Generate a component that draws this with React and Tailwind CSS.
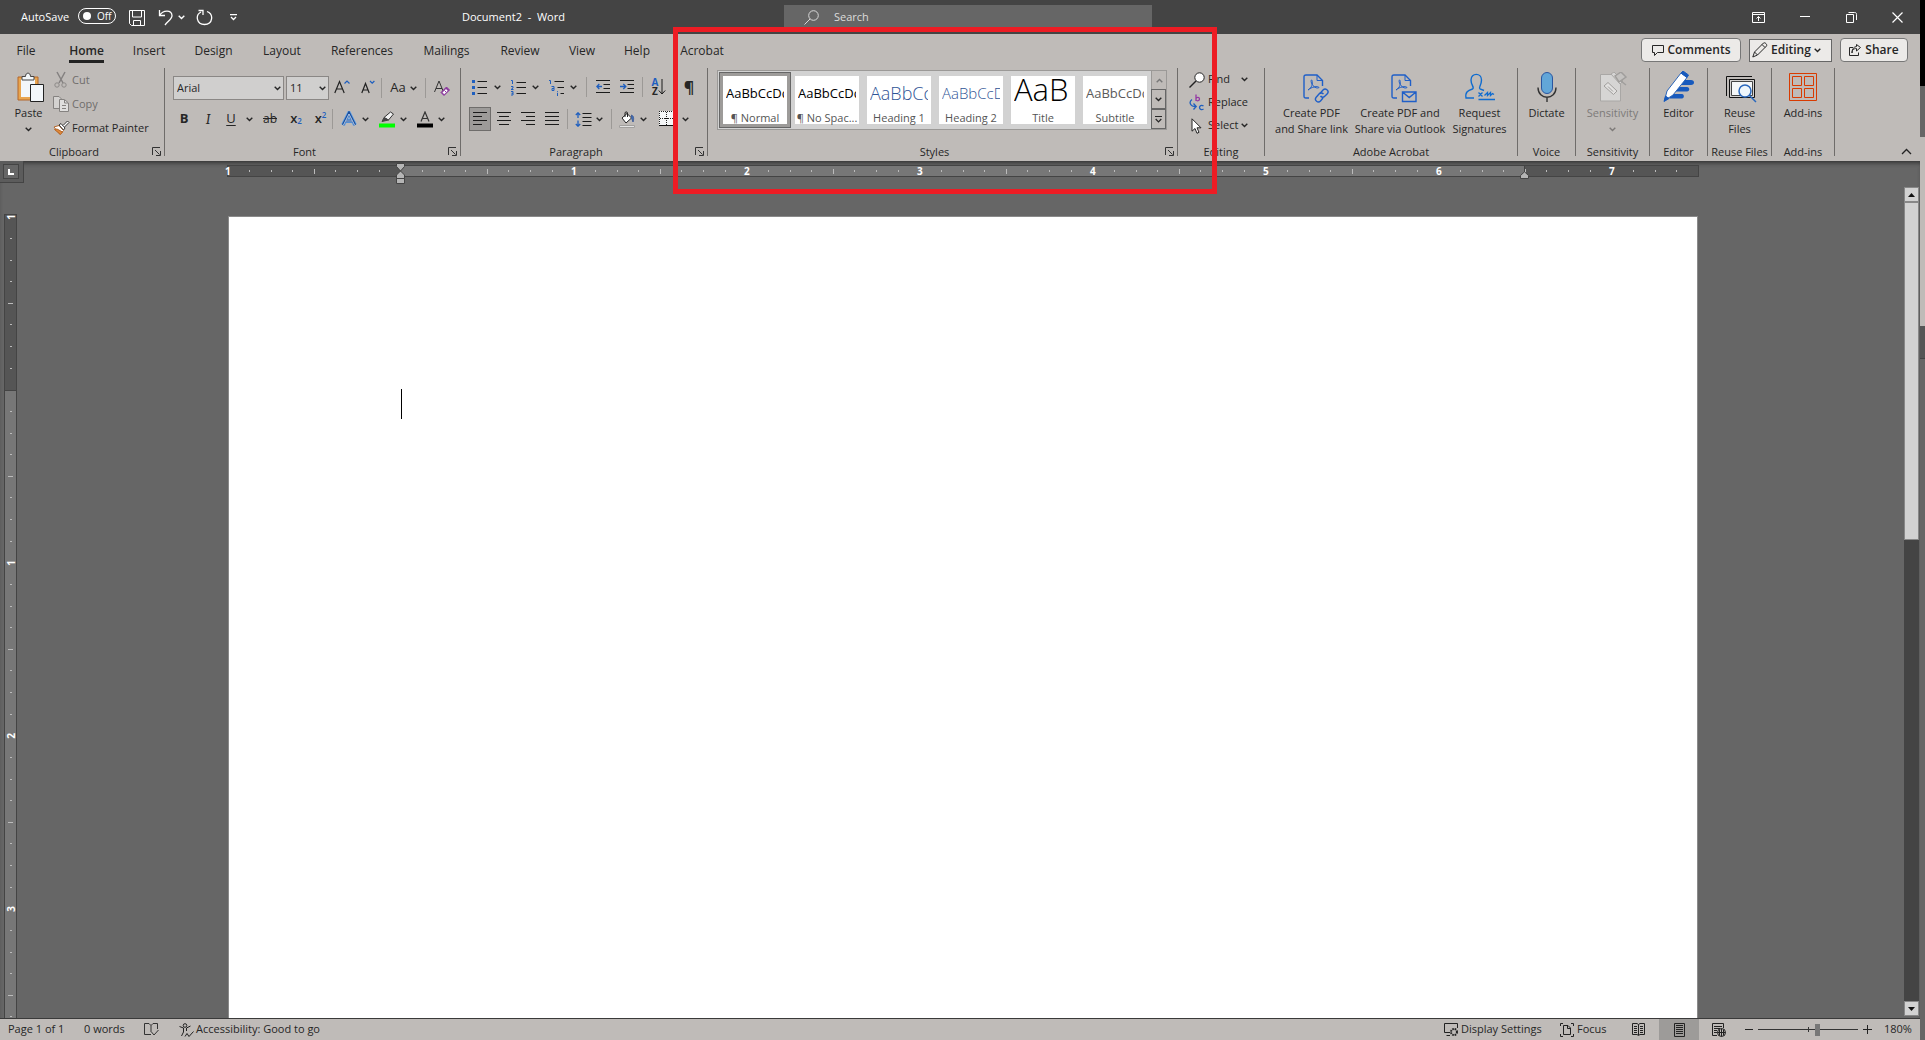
import React, { useState } from 'react';

const tabs = [
    { name: 'File', width: 'w-[52px]' },
    { name: 'Home', width: 'w-[69px]' },
    { name: 'Insert', width: 'w-[56px]' },
    { name: 'Design', width: 'w-[73px]' },
    { name: 'Layout', width: 'w-[64px]' },
    { name: 'References', width: 'w-[96px]' },
    { name: 'Mailings', width: 'w-[73px]' },
    { name: 'Review', width: 'w-[74px]' },
    { name: 'View', width: 'w-[50px]' },
    { name: 'Help', width: 'w-[60px]' },
    { name: 'Acrobat', width: 'w-[70px]' },
];

const styles = [
    { name: '¶ Normal', preview: 'AaBbCcDd', look: 'text-[13px] text-black' },
    { name: '¶ No Spac...', preview: 'AaBbCcDd', look: 'text-[13px] text-black' },
    { name: 'Heading 1', preview: 'AaBbCc', look: 'text-[18px] font-light text-[#2f5496]' },
    { name: 'Heading 2', preview: 'AaBbCcD', look: 'text-[15px] font-light text-[#2f5496]' },
    { name: 'Title', preview: 'AaB', look: 'pb-2 text-[31px] font-light text-black' },
    { name: 'Subtitle', preview: 'AaBbCcDd', look: 'text-[13px] text-[#5a5a5a]' },
];

const Svg = ({ w, h, children, className }) => (
    <svg width={w} height={h} viewBox={`0 0 ${w} ${h}`} fill="none" stroke="currentColor" className={`shrink-0 ${className || ''}`} aria-hidden="true">
        {children}
    </svg>
);

const Chevron = ({ className }) => (
    <Svg w={7} h={5} className={className}>
        <path d="M.7 .8 3.5 3.6 6.3 .8" strokeWidth="1.4" />
    </Svg>
);

const Lines = ({ rows }) => (
    <Svg w={15} h={14}>
        {rows.map(([x1, x2], i) => (
            <path key={i} d={`M${x1} ${i * 4 + 0.5}H${x2}`} stroke="#1b1b1b" />
        ))}
    </Svg>
);

const Tool = ({ label, className, children }) => (
    <button type="button" aria-label={label} className={`flex h-6 shrink-0 items-center justify-center ${className}`}>
        {children}
    </button>
);

const More = ({ label, className = 'w-2' }) => (
    <Tool label={label} className={className}>
        <Chevron />
    </Tool>
);

const Sep = ({ className }) => <div className={`h-5 w-px shrink-0 bg-[#9c9996] ${className || ''}`} />;

const Launcher = ({ label }) => (
    <button type="button" aria-label={label} className="absolute right-[3px] bottom-0">
        <Svg w={9} h={9}>
            <path d="M.5 8V.5H8M3 3l4.500 4.500M8.500 4v4.500H4" stroke="#333" />
        </Svg>
    </button>
);

const Group = ({ label, className, launcher, children }) => (
    <section aria-label={label} className={`relative flex h-[88px] shrink-0 flex-col border-r border-[#6f6c6a] ${className}`}>
        <div className="min-h-0 flex-1">{children}</div>
        <div className={`h-2 text-center text-[11px] leading-[8px] whitespace-nowrap ${launcher ? 'pr-4' : ''}`}>{label}</div>
        {launcher && <Launcher label={`${label} settings`} />}
    </section>
);

const BigButton = ({ icon, lines, className, children }) => (
    <button type="button" className={`flex shrink-0 flex-col items-center text-[11px] leading-4 whitespace-nowrap ${className}`}>
        <span className="flex h-[37px] items-center">{icon}</span>
        {lines.map((line) => (
            <span key={line}>{line}</span>
        ))}
        {children}
    </button>
);

/* ---------- icons ---------- */

const PasteIcon = () => (
    <Svg w={28} h={30} className="ml-1">
        <path d="M1 5H21V28H1Z" fill="#e8a54f" stroke="#b4662a" />
        <path d="M4 7H18V25H4Z" fill="#f3f7fa" stroke="none" />
        <path d="M5 8V4.500H8.500C8.500 0 13.500 0 13.500 4.500H17V8Z" fill="#f3f7fa" stroke="#444" />
        <path d="M13.500 12.500H26.500V29.500H13.500Z" fill="#f3f7fa" stroke="#222" />
    </Svg>
);

const CutIcon = () => (
    <Svg w={16} h={18}>
        <path d="M4 1 10 12M12 1 6 12" stroke="#848180" strokeWidth="1.500" />
        <circle cx="4" cy="14" r="2.200" stroke="#8d8a88" />
        <circle cx="11" cy="14" r="2.200" stroke="#8d8a88" />
    </Svg>
);

const CopyIcon = () => (
    <Svg w={16} h={16}>
        <path d="M.5 .5H6L8.500 3V12.500H.5Z" fill="#d4d2d0" stroke="#858280" />
        <path d="M6.500 3.500H11.500L15.500 7V15.500H6.500Z" fill="#e0dfde" stroke="#858280" />
        <path d="M9 9.500H13M9 12.500H13M11.500 4V7H15" stroke="#858280" />
    </Svg>
);

const BrushIcon = () => (
    <Svg w={17} h={16}>
        <path d="M1 7 6 5.500 10.500 10.500 7 14.500Z" fill="#fff" stroke="#b4662a" />
        <path d="M1.500 9.500 7.500 14.500 9.500 12 4 9Z" fill="#e08a3a" stroke="#b4662a" />
        <path d="M6 5 8 3.500 12 8 10.500 10Z" fill="#fff" stroke="#333" />
        <path d="M10 5.500 14.500 1 16 2.500 11.500 7" fill="#fff" stroke="#333" />
    </Svg>
);

const NumberedIcon = () => (
    <Svg w={17} h={17}>
        <path d="M6.500 3.500H16M6.500 8.500H16M6.500 14.500H16" stroke="#1b1b1b" />
        <path d="M1 1.500H2.500V5M1 7.500H3V9L1 10.500H3.500M1 12.500H3V16H1M1.500 14.300H3" stroke="#1f5fbf" />
    </Svg>
);

const BulletIcon = () => (
    <Svg w={16} h={16}>
        <path d="M5.500 2.500H15M5.500 8.500H15M5.500 14.500H15" stroke="#1b1b1b" />
        <path d="M0 1h3v3H0zM0 7h3v3H0zM0 13h3v3H0z" fill="#1f5fbf" stroke="none" />
    </Svg>
);

const MultiIcon = () => (
    <Svg w={16} h={17}>
        <path d="M5.500 2.500H15M8.500 8.500H15M11.500 14.500H15" stroke="#1b1b1b" />
        <path d="M0 1.500H1.500V5M2.500 7.500H5V11.500H3V9.500H5M8.500 12V12.800M8.500 13.800V17" stroke="#1f5fbf" />
    </Svg>
);

const IndentIcon = ({ right }) => (
    <Svg w={15} h={14}>
        <path d="M0 .5H14M7.500 4.500H14M7.500 8.500H14M0 12.500H14" stroke="#1b1b1b" />
        {right ? (
            <path d="M0 6.500H5.500M3.300 4 5.800 6.500 3.300 9" stroke="#1f5fbf" strokeWidth="1.300" />
        ) : (
            <path d="M6 6.500H.8M3.300 4 .8 6.500 3.300 9" stroke="#1f5fbf" strokeWidth="1.300" />
        )}
    </Svg>
);

const SortIcon = () => (
    <span className="flex items-center">
        <span className="flex flex-col text-[10px] leading-[9px] font-bold">
            <span className="text-[#1f5fbf]">A</span>
            <span>Z</span>
        </span>
        <Svg w={8} h={16}>
            <path d="M4 0V15M.8 11.500 4 15 7.200 11.500" stroke="#1b1b1b" />
        </Svg>
    </span>
);

const SpacingIcon = () => (
    <Svg w={17} h={15}>
        <path d="M7.500 1.500H16.500M7.500 5.500H16.500M7.500 9.500H16.500M7.500 13.500H16.500" stroke="#1b1b1b" />
        <path d="M3 1V6M.8 3 3 .8 5.200 3M3 8.500V14M.8 12 3 14.200 5.200 12" stroke="#1f5fbf" strokeWidth="1.300" />
    </Svg>
);

const BucketIcon = () => (
    <Svg w={17} h={17}>
        <path d="M3 7 8 2.500 12.500 7 7 12Z" fill="#fff" stroke="#222" />
        <path d="M6 6V2C6 .5 8.500 .5 8.500 2V6" stroke="#222" />
        <path d="M12.500 4C15 5 15 8 14 11L12.500 7Z" fill="#3f6fb5" stroke="#44609a" />
        <path d="M.5 14.500H15.500V16.500H.5Z" fill="#e3e3e3" stroke="#a2a09e" />
    </Svg>
);

const BordersIcon = () => (
    <Svg w={16} h={16}>
        <path d="M0 0H16V15H0Z" fill="#f5f7f8" stroke="none" />
        <path d="M0 .5H16M.5 0V15M15.500 0V15M7.500 1V15M1 7.500H15" stroke="#222" strokeDasharray="1 1" />
        <path d="M0 14.500H16M6 7.500H9" stroke="#111" />
    </Svg>
);

const EraserIcon = () => (
    <Svg w={16} h={17}>
        <path d="M.5 12 5 1 9.500 12M2 8.500H8" stroke="#333" />
        <path d="M7 12.500 12.500 7 15.500 10 10 15.500Z" fill="#8d3a9e" stroke="#8d3a9e" />
        <path d="M8.500 12.500 12 9 13.700 10.700 10.200 14.200Z" fill="#fff" stroke="none" />
        <path d="M10.500 10.500 12.200 12.200" stroke="#8d3a9e" />
    </Svg>
);

const HighlightIcon = () => (
    <Svg w={17} h={17}>
        <path d="M5 6.500 11.500 1 14.500 3 9.500 9Z" fill="#f3f3f3" stroke="#333" />
        <path d="M5 6.500 3 10.500 9.500 9Z" fill="#444" stroke="#444" />
        <path d="M0 12.500H16V16.500H0Z" fill="#00ff00" stroke="none" />
    </Svg>
);

const FindIcon = () => (
    <Svg w={16} h={16}>
        <circle cx="10.500" cy="5.500" r="4.700" fill="#fff" stroke="#222" />
        <path d="M7 9 .5 15.500" stroke="#222" strokeWidth="1.400" />
    </Svg>
);

const ReplaceIcon = () => (
    <Svg w={16} h={17}>
        <path d="M7 .5V7M7 4.500C8 2.500 10.500 3.200 10.500 5S8 7.500 7 6" stroke="#9438a4" strokeWidth="1.300" />
        <path d="M14.500 12C12.500 10.500 10.500 12 10.500 13.500S12.500 16.500 14.500 15" stroke="#1f5fbf" strokeWidth="1.300" />
        <path d="M3 5.500C-.5 8 1 12.500 7 12.500M4.500 9.500 7.200 12.500 4.500 15.500" stroke="#1f5fbf" strokeWidth="1.300" />
    </Svg>
);

const SelectIcon = () => (
    <Svg w={16} h={16}>
        <path d="M3 .8V13.200L6 10.500 8 15.300 10 14.300 8 9.800H12Z" fill="#fff" stroke="#222" />
    </Svg>
);

const PdfIcon = ({ mail }) => (
    <Svg w={26} h={29} className="mt-1 ml-2">
        <path d="M6 24H3C1.500 24 1 23.500 1 22V3C1 1.500 1.500 1 3 1H14L19.500 6.500V12" stroke="#1f5fc8" strokeWidth="1.400" />
        <path d="M14 1V6.500H19.500" stroke="#1f5fc8" />
        <path d="M5 16C9 14 10 9 9 6.500C8.500 5 7.500 6.500 8.500 9C10 13 14 15 16 13.500C15.500 11.500 8 13 5 16Z" stroke="#1f5fc8" />
        {mail ? (
            <path d="M11.500 18H25V27.500H11.500ZM11.500 18 18.200 23.500 25 18" stroke="#1f5fc8" strokeWidth="1.400" />
        ) : (
            <g stroke="#1f5fc8" strokeWidth="1.400">
                <path d="M17 19.500 20 16C22.500 13.500 26.500 16.500 24.500 19.500L21.500 22.500C20.500 23.500 18.500 23.500 17.500 22" />
                <path d="M20.500 20C19 18.500 17 18.800 16 20L13 23.500C11 26.500 15 29.500 17.500 27L20 24" />
            </g>
        )}
    </Svg>
);

const SignIcon = () => (
    <Svg w={32} h={28}>
        <path d="M10 25H2C1 19 4 17.500 8.500 16C11 14.500 7 12.500 7 7C7 -.5 17.500 -.5 17.500 7C17.500 12.500 14 14.500 16 16L20 17.500" stroke="#0f6cd0" strokeWidth="1.400" />
        <path d="M14.500 19.500 18.500 23.500M18.500 19.500 14.500 23.500M20.500 22.500 23.500 19.500V22.500L26.500 19.500V22.500L28.500 20.500 30 21.500M14.500 26.500H31" stroke="#0f6cd0" strokeWidth="1.300" />
    </Svg>
);

const MicIcon = () => (
    <Svg w={20} h={30}>
        <rect x="4.500" y=".5" width="11" height="21" rx="5.500" fill="#62a6d8" stroke="#2b56a0" />
        <path d="M1 15.500C1 28.500 19 28.500 19 15.500M10 25.500V30" stroke="#333" strokeWidth="1.400" />
    </Svg>
);

const SensitivityIcon = () => (
    <Svg w={28} h={30}>
        <path d="M1.500 2.500H21.500V29H1.500Z" fill="#d6d5d4" stroke="#a9a7a5" />
        <path d="M12 2 15 0 24 9 21 12Z" fill="#d6d5d4" stroke="#a9a7a5" />
        <path d="M16 4 22 0 27 5 20 10ZM22 9 27 13" fill="#c4c2c0" stroke="#a09e9c" strokeWidth="1.500" />
        <path d="M5 14 9 10.500 18 19 14.500 22.500ZM9 14.500 14 19.500" fill="#e2e1e0" stroke="#a09e9c" />
    </Svg>
);

const EditorIcon = () => (
    <Svg w={31} h={31}>
        <path d="M18 9H28C32 9 32 14 28 14H14ZM14 16H24C27 16 27 20.500 24 20.500H10ZM9 23H19C21.500 23 21.500 27.500 19 27.500H6Z" fill="#185abd" stroke="none" />
        <path d="M4 20 18 2 24 6.500 10 24 1.500 29.500Z" fill="#fff" stroke="#2a64b8" />
        <path d="M18 2 20 0 25.500 4 24 6.500ZM1 30.500 2.500 25 6 27.500Z" fill="#185abd" stroke="#185abd" />
    </Svg>
);

const ReuseIcon = () => (
    <Svg w={31} h={28} className="mt-1 ml-1">
        <path d="M.5 21V1.500H26" stroke="#111" />
        <path d="M3.500 4.500H28.500V22.500H3.500Z" fill="#d4d2d1" stroke="#111" />
        <path d="M5.500 6.500H26.500V20.500H5.500Z" fill="#f5f7f8" stroke="#444" />
        <circle cx="19" cy="16" r="6" fill="#eef6fc" stroke="#2a68bd" strokeWidth="1.500" />
        <path d="M23.500 20.500 30 27" stroke="#2a68bd" strokeWidth="1.500" />
    </Svg>
);

const AddinsIcon = () => (
    <Svg w={28} h={28}>
        <path d="M.5 .5H27.500V27.500H.5ZM3.500 3.500H12.500V12.500H3.500ZM15.500 3.500H24.500V12.500H15.500ZM3.500 15.500H12.500V24.500H3.500ZM15.500 15.500H24.500V24.500H15.500Z" stroke="#d83b01" />
    </Svg>
);

/* ---------- title bar ---------- */

const TitleBar = () => {
    const [autoSave, setAutoSave] = useState(false);

    return (
        <header className="flex h-[34px] items-center bg-[#444] text-[11px] text-white">
            <div className="flex w-[450px] items-center pl-[21px]">
                <label className="flex w-[108px] items-center" htmlFor="autosave">
                    <span className="w-[57px]">AutoSave</span>
                    <input id="autosave" type="checkbox" className="sr-only" checked={autoSave} onChange={(e) => setAutoSave(e.target.checked)} />
                    <span className="mb-0.5 flex h-4 w-[38px] items-center gap-1.5 rounded-full border border-white pl-1 text-[10px] leading-none">
                        <span className="h-2 w-2 rounded-full bg-white" />
                        {autoSave ? 'On' : 'Off'}
                    </span>
                </label>
                <button type="button" aria-label="Save" className="w-[29px] pt-0.5">
                    <Svg w={16} h={16}>
                        <path d="M.5 .5H15.500V15.500H2.500L.5 13.500ZM3.500 .5V7H12.500V.5M4.500 15.500V10.500H11.500V15.500" />
                    </Svg>
                </button>
                <button type="button" aria-label="Undo" className="w-[20px]">
                    <Svg w={16} h={17}>
                        <path d="M1.500 1V6.500H7M1.500 6.500C5 1 13.500 .5 14 6.500C14.300 10 10 12 7 16" strokeWidth="1.300" />
                    </Svg>
                </button>
                <button type="button" aria-label="Undo list" className="w-[18px]">
                    <Chevron />
                </button>
                <button type="button" aria-label="Redo" className="w-[34px]">
                    <Svg w={17} h={17}>
                        <path d="M2.500 1.500H7V6M5 3C-1 6 .5 15.500 8.500 15.500C17 15.500 18 5 11 2.500" strokeWidth="1.300" />
                    </Svg>
                </button>
                <button type="button" aria-label="Customize toolbar">
                    <Svg w={7} h={7}>
                        <path d="M0 .5H7M1 3 3.500 5.500 6 3" strokeWidth="1.300" />
                    </Svg>
                </button>
            </div>
            <h1 className="w-[334px] pt-px pl-3 whitespace-pre">Document2  -  Word</h1>
            <label className="flex h-6 w-[368px] items-center bg-[#666] pl-5" htmlFor="search">
                <Svg w={15} h={15}>
                    <circle cx="9.500" cy="5.500" r="4.800" stroke="#d8d8d8" />
                    <path d="M6 9 .5 14.500" stroke="#d8d8d8" />
                </Svg>
                <input id="search" type="text" placeholder="Search" className="ml-[15px] w-60 bg-transparent text-[11px] outline-none placeholder:text-[#dcdcdc]" />
            </label>
            <div className="ml-auto flex items-center">
                <button type="button" aria-label="Ribbon display options" className="flex w-[47px] justify-center">
                    <Svg w={13} h={11}>
                        <path d="M.5 .5H12.500V10.500H.5ZM.5 2.500H12.500M6.500 9V4.500M4.500 6.500 6.500 4.500 8.500 6.500" />
                    </Svg>
                </button>
                <button type="button" aria-label="Minimize" className="flex w-[46px] justify-center">
                    <Svg w={10} h={2}>
                        <path d="M0 .5H10" />
                    </Svg>
                </button>
                <button type="button" aria-label="Restore" className="flex w-[46px] justify-center">
                    <Svg w={11} h={11}>
                        <path d="M.5 2.500H7.500V10.500H.5ZM2.500 .5H8.500C10 .5 10.500 1 10.500 2.500V8" />
                    </Svg>
                </button>
                <button type="button" aria-label="Close" className="flex w-[46px] justify-center">
                    <Svg w={11} h={11}>
                        <path d="M.5 .5 10.500 10.500M10.500 .5 .5 10.500" strokeWidth="1.200" />
                    </Svg>
                </button>
            </div>
        </header>
    );
};

/* ---------- ribbon ---------- */

const ClipboardGroup = () => (
    <Group label="Clipboard" className="w-[165px]" launcher>
        <div className="flex">
            <BigButton className="w-[53px] pl-1" icon={<PasteIcon />} lines={['Paste']}>
                <Chevron className="mt-1.5" />
            </BigButton>
            <div className="flex flex-col text-[11px] whitespace-nowrap">
                <button type="button" className="flex h-6 items-center gap-[3px] text-[#6f6d6b]">
                    <CutIcon />
                    Cut
                </button>
                <button type="button" className="flex h-6 items-center gap-[3px] text-[#6f6d6b]">
                    <CopyIcon />
                    Copy
                </button>
                <button type="button" className="flex h-6 items-center gap-0.5">
                    <BrushIcon />
                    Format Painter
                </button>
            </div>
        </div>
    </Group>
);

const FontGroup = () => (
    <Group label="Font" className="w-[296px]" launcher>
        <div className="flex items-center pt-2 pl-2">
            <div className="relative">
                <select aria-label="Font" className="block h-6 w-[111px] appearance-none border border-[#8a8785] bg-[#d0cfce] pl-[3px] text-[11px]">
                    <option>Arial</option>
                    <option>Calibri</option>
                </select>
                <Chevron className="pointer-events-none absolute top-2.5 right-[3px]" />
            </div>
            <div className="relative ml-0.5">
                <select aria-label="Font size" defaultValue="11" className="block h-6 w-[43px] appearance-none border border-[#8a8785] bg-[#d0cfce] pl-[3px] text-[11px]">
                    <option>11</option>
                    <option>12</option>
                </select>
                <Chevron className="pointer-events-none absolute top-2.5 right-[3px]" />
            </div>
            <Tool label="Grow font" className="w-[26px]">
                <Svg w={16} h={18}>
                    <path d="M.8 14 5.500 2.500 10.200 14M2.500 10H8.500" stroke="#222" strokeWidth="1.200" />
                    <path d="M10.500 4.500 13 2 15.500 4.500" stroke="#1f5fbf" strokeWidth="1.200" />
                </Svg>
            </Tool>
            <Tool label="Shrink font" className="w-[26px]">
                <Svg w={14} h={18}>
                    <path d="M.8 14 4.500 4.500 8.200 14M2 11H7" stroke="#222" strokeWidth="1.200" />
                    <path d="M9 2 11.200 4.200 13.400 2" stroke="#1f5fbf" strokeWidth="1.200" />
                </Svg>
            </Tool>
            <Sep />
            <Tool label="Change case" className="w-[43px] gap-1 text-[13px]">
                Aa
                <Chevron />
            </Tool>
            <Sep />
            <Tool label="Clear formatting" className="w-8">
                <EraserIcon />
            </Tool>
        </div>
        <div className="flex items-center pt-[7px] pl-[7px] text-[13px]">
            <Tool label="Bold" className="w-6 font-bold">B</Tool>
            <Tool label="Italic" className="w-6 font-serif text-[14px] italic">I</Tool>
            <Tool label="Underline" className="w-[22px] underline underline-offset-2">U</Tool>
            <More label="Underline styles" className="w-[15px]" />
            <Tool label="Strikethrough" className="w-[26px] text-[12px] line-through">ab</Tool>
            <Tool label="Subscript" className="w-[26px] font-semibold">
                x<sub className="text-[8px] text-[#1f5fbf]">2</sub>
            </Tool>
            <Tool label="Superscript" className="w-[23px] font-semibold">
                x<sup className="text-[8px] text-[#1f5fbf]">2</sup>
            </Tool>
            <Sep />
            <div className="ml-1 flex gap-1.5">
                <div className="flex">
                    <Tool label="Text effects" className="w-6">
                        <Svg w={16} h={16}>
                            <path d="M2 14 8 2 14 14M5 10H11" stroke="#6aa5e6" strokeWidth="4" />
                            <path d="M2 14 8 2 14 14M5 10H11" stroke="#1a4f9c" strokeWidth="2.500" />
                            <path d="M2.500 14 8 3 13.500 14M5 10H11" stroke="#dfeaf7" strokeWidth=".8" />
                        </Svg>
                    </Tool>
                    <More label="Text effects list" />
                </div>
                <div className="flex">
                    <Tool label="Highlight" className="w-6">
                        <HighlightIcon />
                    </Tool>
                    <More label="Highlight colours" />
                </div>
                <div className="flex">
                    <Tool label="Font colour" className="w-6">
                        <Svg w={16} h={17}>
                            <path d="M4 10.500 8 1 12 10.500M5.300 7.500H10.700" stroke="#333" strokeWidth="1.200" />
                            <path d="M0 12.500H16V16.500H0Z" fill="#000" stroke="none" />
                        </Svg>
                    </Tool>
                    <More label="Font colours" />
                </div>
            </div>
        </div>
    </Group>
);

const ParagraphGroup = () => (
    <Group label="Paragraph" className="w-[247px]" launcher>
        <div className="flex items-center pt-[7px] pl-2">
            <Tool label="Bullets" className="w-[22px]"><BulletIcon /></Tool>
            <More label="Bullet library" className="w-[13px]" />
            <Tool label="Numbering" className="ml-[3px] w-[22px]"><NumberedIcon /></Tool>
            <More label="Numbering library" className="w-[13px]" />
            <Tool label="Multilevel list" className="ml-1 w-[22px]"><MultiIcon /></Tool>
            <More label="List library" className="w-[11px]" />
            <Sep className="ml-[7px]" />
            <Tool label="Decrease indent" className="ml-1 w-6"><IndentIcon /></Tool>
            <Tool label="Increase indent" className="w-6"><IndentIcon right /></Tool>
            <Sep className="ml-[3px]" />
            <Tool label="Sort" className="ml-1 w-6"><SortIcon /></Tool>
            <Tool label="Show marks" className="ml-1.5 w-6 text-[16px] font-bold">¶</Tool>
        </div>
        <div className="flex items-center pt-2 pl-2">
            <div className="flex gap-0.5">
                <Tool label="Align left" className="w-[22px] bg-[#9d9b99] ring-1 ring-[#6f6d6b] ring-inset">
                    <Lines rows={[[0, 14], [0, 9], [0, 14], [0, 9]]} />
                </Tool>
                <Tool label="Center" className="w-[22px]"><Lines rows={[[0, 14], [2, 12], [0, 14], [2, 12]]} /></Tool>
                <Tool label="Align right" className="w-[22px]"><Lines rows={[[0, 14], [5, 14], [0, 14], [5, 14]]} /></Tool>
                <Tool label="Justify" className="w-[22px]"><Lines rows={[[0, 14], [0, 14], [0, 14], [0, 14]]} /></Tool>
            </div>
            <Sep className="ml-1" />
            <Tool label="Line spacing" className="ml-[3px] w-6"><SpacingIcon /></Tool>
            <More label="Line spacing options" />
            <Sep className="ml-2" />
            <Tool label="Shading" className="ml-[3px] w-6"><BucketIcon /></Tool>
            <More label="Shading colours" />
            <Tool label="Borders" className="ml-2 w-6"><BordersIcon /></Tool>
            <More label="Border options" className="w-3" />
        </div>
    </Group>
);

const StylesGroup = () => {
    const [active, setActive] = useState(0);

    return (
        <Group label="Styles" className="w-[470px]" launcher>
            <div className="mt-0.5 ml-[9px] flex h-[60px] w-[450px] border border-[#9b9997] bg-[#d2d2d2]">
                <div className="flex flex-1 items-center pl-px">
                    {styles.map((style, i) => (
                        <button
                            key={style.name}
                            type="button"
                            onClick={() => setActive(i)}
                            className={`flex h-14 w-[72px] flex-col border p-[3px] ${
                                i === active ? 'border-[#666] bg-[#9d9b99]' : 'border-transparent'
                            }`}
                        >
                            <span className="flex h-12 w-full flex-col bg-white px-[3px] pt-[3px]">
                                <span className={`flex h-[29px] items-center overflow-hidden whitespace-nowrap ${style.look}`}>
                                    {style.preview}
                                </span>
                                <span className="flex h-4 items-center justify-center pt-1 text-[11px] leading-4 whitespace-nowrap text-[#555]">{style.name}</span>
                            </span>
                        </button>
                    ))}
                </div>
                <div className="flex w-[15px] flex-col">
                    <button type="button" aria-label="Previous styles" className="flex flex-1 items-center justify-center border-l border-[#9b9997] bg-[#bfbbb8] text-[#777]">
                        <Chevron className="rotate-180" />
                    </button>
                    <button type="button" aria-label="Next styles" className="flex flex-1 items-center justify-center border border-[#666] bg-[#bfbbb8]">
                        <Chevron />
                    </button>
                    <button type="button" aria-label="All styles" className="flex flex-1 items-center justify-center border border-[#666] bg-[#bfbbb8]">
                        <Svg w={7} h={7}>
                            <path d="M0 .5H7M.7 3 3.500 5.800 6.300 3" strokeWidth="1.200" />
                        </Svg>
                    </button>
                </div>
            </div>
        </Group>
    );
};

const EditingGroup = () => (
    <Group label="Editing" className="w-[87px]">
        <div className="flex flex-col pl-[11px] text-[11px]">
            <button type="button" className="flex h-[23px] items-center gap-[3px]">
                <FindIcon />
                Find
                <Chevron className="ml-2" />
            </button>
            <button type="button" className="flex h-[23px] items-center gap-[3px]">
                <ReplaceIcon />
                Replace
            </button>
            <button type="button" className="flex h-[23px] items-center gap-[3px]">
                <SelectIcon />
                Select
                <Chevron />
            </button>
        </div>
    </Group>
);

const Ribbon = () => (
    <div className="flex pt-0.5 pb-[5px]">
        <ClipboardGroup />
        <FontGroup />
        <ParagraphGroup />
        <StylesGroup />
        <EditingGroup />
        <Group label="Adobe Acrobat" className="w-[253px]">
            <div className="flex justify-center">
                <BigButton className="w-[80px]" icon={<PdfIcon />} lines={['Create PDF', 'and Share link']} />
                <BigButton className="w-[97px]" icon={<PdfIcon mail />} lines={['Create PDF and', 'Share via Outlook']} />
                <BigButton className="w-[62px]" icon={<SignIcon />} lines={['Request', 'Signatures']} />
            </div>
        </Group>
        <Group label="Voice" className="w-[58px]">
            <BigButton className="w-full" icon={<MicIcon />} lines={['Dictate']} />
        </Group>
        <Group label="Sensitivity" className="w-[74px]">
            <BigButton className="w-full text-[#7d7a78]" icon={<SensitivityIcon />} lines={['Sensitivity']}>
                <Chevron className="mt-1.5" />
            </BigButton>
        </Group>
        <Group label="Editor" className="w-[58px]">
            <BigButton className="w-full" icon={<EditorIcon />} lines={['Editor']} />
        </Group>
        <Group label="Reuse Files" className="w-[64px]">
            <BigButton className="w-full" icon={<ReuseIcon />} lines={['Reuse', 'Files']} />
        </Group>
        <Group label="Add-ins" className="w-[63px]">
            <BigButton className="w-full" icon={<AddinsIcon />} lines={['Add-ins']} />
        </Group>
        <button type="button" aria-label="Collapse ribbon" className="mr-2 ml-auto self-end pb-px">
            <Svg w={11} h={7}>
                <path d="M1 6 5.500 1.500 10 6" stroke="#222" strokeWidth="1.300" />
            </Svg>
        </button>
    </div>
);

const TabBar = () => {
    const [tab, setTab] = useState('Home');

    return (
        <nav className="flex h-8 items-center">
            {tabs.map(({ name, width }) => (
                <button key={name} type="button" onClick={() => setTab(name)} className={`flex h-full shrink-0 items-center justify-center text-[12px] ${width}`}>
                    <span className={`border-b-[3px] pt-[5px] ${tab === name ? 'border-b-[#222] font-semibold' : 'border-b-transparent'}`}>{name}</span>
                </button>
            ))}
            <div className="mr-3 ml-auto flex items-center gap-2 text-[12px]">
                <button type="button" className="flex h-6 w-[100px] items-center justify-center gap-1 rounded border border-[#777] bg-[#eceae8] font-semibold">
                    <Svg w={12} h={11}>
                        <path d="M.5 .5H11.500V7.500H5.500L2.500 10.500V7.500H.5Z" />
                    </Svg>
                    Comments
                </button>
                <button type="button" className="flex h-[23px] w-[83px] items-center gap-[3px] border border-[#666] bg-[#eceae8] pl-0.5 font-semibold">
                    <Svg w={16} h={16}>
                        <path d="M.8 15 2.500 10 11.500 1C13 0 15.500 2.500 14.500 4L5.500 13ZM10 2.500 13 5.500M2.500 10 5.500 13" />
                    </Svg>
                    Editing
                    <Chevron />
                </button>
                <button type="button" className="flex h-6 w-[68px] items-center justify-center gap-1 rounded border border-[#777] bg-[#eceae8] font-semibold">
                    <Svg w={12} h={12}>
                        <path d="M4 3.500H.5V11.500H9.500V8.500M3 9C3 5.500 5 4.500 7.500 4.500V7L11.500 3.500 7.500 .5V2.500C4.500 3 3 5 3 9Z" />
                    </Svg>
                    Share
                </button>
            </div>
        </nav>
    );
};

/* ---------- rulers ---------- */

const inches = [1, 0, 1, 2, 3, 4, 5, 6, 7];
const eighths = [0, 1, 2, 3, 4, 5, 6, 7];

const HorizontalRuler = () => (
    <div className="relative mx-auto grid h-3 w-[1472px] grid-cols-1 grid-rows-1">
        <div className="col-start-1 row-start-1 flex border border-[#444]">
            <div className="w-[173px] bg-[#555]" />
            <div className="flex-1 bg-[#777]" />
            <div className="w-[174px] border-l border-[#444] bg-[#555]" />
        </div>
        <div className="col-start-1 row-start-1 -ml-[10px] grid grid-cols-[repeat(9,173px)] items-center">
            {inches.map((inch, n) => (
                <div key={n} className="grid grid-cols-8 items-center">
                    {/* the sheet ends half an inch past the last number */}
                    {(n === inches.length - 1 ? eighths.slice(0, 4) : eighths).map((e) => (
                        <div key={e} className="flex justify-center text-[10px] leading-3 font-bold text-white">
                            {e === 0 ? (inch > 0 ? inch : null) : <span className={e === 4 ? 'h-[5px] w-px bg-[#bbb]' : 'h-0.5 w-px bg-[#bbb]'} />}
                        </div>
                    ))}
                </div>
            ))}
        </div>
        <Svg w={9} h={22} className="absolute -top-0.5 left-[169px]">
            <path d="M.5 .5H8.500V3.500L4.500 8 8.500 12V15.500H.5V12L4.500 8 .5 3.500ZM.5 15.500H8.500V20.500H.5Z" fill="#b5b5b5" stroke="#444" />
        </Svg>
        <Svg w={9} h={8} className="absolute top-1.5 right-[170px]">
            <path d="M4.500 .8 8.500 4.500V7.500H.5V4.500Z" fill="#b5b5b5" stroke="#444" />
        </Svg>
    </div>
);

const VerticalRuler = () => (
    <div className="mt-[53px] ml-1 grid w-[13px] flex-1 grid-cols-1 grid-rows-1 overflow-hidden border border-b-0 border-[#444] bg-[#777]">
        <div className="col-start-1 row-start-1 h-[176px] border-b border-[#444] bg-[#555]" />
        <div className="col-start-1 row-start-1 -mt-[9px] h-0">
            {inches.slice(0, 5).map((inch, n) => (
                <div key={n} className="flex h-[173px] flex-col">
                    {eighths.map((e) => (
                        <div key={e} className="flex flex-1 items-center justify-center text-[10px] leading-none font-bold text-white">
                            {e === 0 ? (
                                inch > 0 && <span className="-rotate-90">{inch}</span>
                            ) : (
                                <span className={e === 4 ? 'h-px w-[5px] bg-[#bbb]' : 'h-px w-0.5 bg-[#bbb]'} />
                            )}
                        </div>
                    ))}
                </div>
            ))}
        </div>
    </div>
);

const Scrollbar = () => (
    <div className="mt-[26px] mb-0.5 flex w-[15px] flex-col bg-[#444]">
        <button type="button" aria-label="Scroll up" className="flex h-[15px] items-center justify-center border border-[#888] bg-[#d2d2d2]">
            <Svg w={7} h={4}><path d="M0 4 3.500 0 7 4Z" fill="#111" stroke="none" /></Svg>
        </button>
        <div className="h-[338px] border border-[#888] bg-[#d2d2d2]" />
        <button type="button" aria-label="Scroll down" className="mt-auto flex h-[15px] items-center justify-center border border-[#888] bg-[#d2d2d2]">
            <Svg w={7} h={4}><path d="M0 0 3.500 4 7 0Z" fill="#111" stroke="none" /></Svg>
        </button>
    </div>
);

const Workspace = () => (
    <main className="flex min-h-0 flex-1 bg-[#666] shadow-[inset_0_4px_4px_-2px_#333]">
        <div className="flex w-[22px] flex-col">
            <div className="-mb-[22px] flex h-[22px] w-6 shrink-0 items-center border-r border-b border-[#444] bg-[#5c5c5c] pl-[3px]">
                <button type="button" aria-label="Tab stop" className="flex h-[15px] w-4 items-center justify-center border border-[#444] bg-[#666]">
                    <Svg w={6} h={6}><path d="M1 0V5H6" stroke="#fff" strokeWidth="2" /></Svg>
                </button>
            </div>
            <VerticalRuler />
        </div>
        <div className="flex min-w-0 flex-1 flex-col overflow-hidden pt-1">
            <HorizontalRuler />
            <article aria-label="Document page" className="mx-auto mt-[39px] w-[1470px] flex-1 border border-b-0 border-[#8a8a8a] bg-white pt-[172px] pl-[172px]">
                <div className="h-[30px] w-px bg-black" />
            </article>
        </div>
        <Scrollbar />
        <div className="w-px" />
    </main>
);

/* ---------- status bar ---------- */

const StatusBar = () => (
    <footer className="flex h-[22px] shrink-0 items-center border-t border-[#3a3a3a] bg-[#bfbbb8] pl-2 text-[11px] whitespace-nowrap">
        <span className="w-[76px]">Page 1 of 1</span>
        <span className="w-[60px]">0 words</span>
        <button type="button" aria-label="Proofing" className="w-[35px]">
            <Svg w={15} h={13}>
                <path d="M7 11.500H.5V.5H5L7 2.500 9 .5H13.500V6M7 2.500V9M7.500 9 10 12 14.500 7" stroke="#333" />
            </Svg>
        </button>
        <button type="button" className="flex items-center gap-0.5">
            <Svg w={15} h={14}>
                <circle cx="6" cy="2.500" r="1.800" stroke="#222" />
                <path d="M.5 3.500 4.500 5V9L2.500 13M11.500 3 7.500 5V8M6 13.500 8 10.500 10 13.500 14.500 8.500" stroke="#222" />
            </Svg>
            Accessibility: Good to go
        </button>
        <div className="ml-auto flex items-center">
            <button type="button" className="flex w-[116px] items-center gap-[3px]">
                <Svg w={14} h={13}>
                    <path d="M6 9.500H.5V.5H13.500V5M2.500 12.500H6" stroke="#222" />
                    <circle cx="10" cy="9" r="3" stroke="#222" strokeWidth="2" strokeDasharray="1.600 .8" />
                </Svg>
                Display Settings
            </button>
            <button type="button" className="flex w-[72px] items-center gap-[3px]">
                <Svg w={14} h={14}>
                    <path d="M.5 3V.5H3M11 .5H13.500V3M.5 11V13.500H3M11 13.500H13.500V11M3.500 2.500H8L10.500 5V11.500H3.500ZM7.500 2.500V5.500H10.500" stroke="#222" />
                </Svg>
                Focus
            </button>
            <button type="button" aria-label="Read mode" className="w-[27px]">
                <Svg w={13} h={13}>
                    <path d="M.5 .5H5L6.500 1.500 8 .5H12.500V11.500H8L6.500 12.500 5 11.500H.5ZM6.500 1.500V12M2 3.500H5M2 5.500H5M2 7.500H5M2 9.500H5M8 3.500H11M8 5.500H11M8 7.500H11M8 9.500H11" stroke="#222" />
                </Svg>
            </button>
            <button type="button" aria-label="Print layout" className="flex h-[21px] w-10 items-center justify-center bg-[#9d9b99]">
                <Svg w={11} h={14}>
                    <path d="M.5 .5H10.500V13.500H.5ZM2 2.500H9M2 4.500H9M2 6.500H9M2 8.500H9M2 10.500H9" stroke="#222" />
                </Svg>
            </button>
            <button type="button" aria-label="Web layout" className="flex w-[46px] pl-[13px]">
                <Svg w={14} h={14}>
                    <path d="M5 12.500H.5V.5H11.500V5M2 3.500H10M2 5.500H8M2 7.500H5M2 9.500H5" stroke="#222" />
                    <circle cx="9.500" cy="9.500" r="4" stroke="#222" />
                    <path d="M5.500 9.500H13.500M9.500 5.500V13.500M7.500 6.500V12.500M11.500 6.500V12.500" stroke="#222" />
                </Svg>
            </button>
            <button type="button" aria-label="Zoom out" className="w-[13px]">
                <Svg w={8} h={9}><path d="M0 4.500H8" stroke="#222" /></Svg>
            </button>
            <input
                type="range"
                aria-label="Zoom"
                min="10"
                max="500"
                defaultValue="305"
                className="h-3 w-[100px] appearance-none bg-[linear-gradient(#333,#333),linear-gradient(#333,#333)] bg-[length:100%_1px,1px_5px] bg-center bg-no-repeat [&::-webkit-slider-thumb]:h-3 [&::-webkit-slider-thumb]:w-[5px] [&::-webkit-slider-thumb]:appearance-none [&::-webkit-slider-thumb]:bg-[#777]"
            />
            <button type="button" aria-label="Zoom in" className="flex w-[26px] pl-[5px]">
                <Svg w={9} h={9}><path d="M0 4.500H9M4.500 0V9" stroke="#222" /></Svg>
            </button>
            <span className="w-9">180%</span>
        </div>
    </footer>
);

const App = () => {
    return (
        <div className="relative flex h-screen w-full overflow-hidden bg-[#666] font-['Open_Sans','Noto_Sans',sans-serif] text-[#262626]">
            <div className="flex min-w-0 flex-1 flex-col">
                <TitleBar />
                <div className="bg-[#bfbbb8]">
                    <TabBar />
                    <Ribbon />
                </div>
                <Workspace />
                <StatusBar />
            </div>
            {/* sliver of the window behind */}
            <div className="flex w-[5px] shrink-0 flex-col">
                <div className="h-[86px] bg-black" />
                <div className="h-[51px] bg-[#666]" />
                <div className="h-[189px] bg-[#bfbbb8]" />
                <div className="h-[33px] border-b border-[#444] bg-[#555]" />
            </div>
            {/* callout around the styles gallery */}
            <div className="pointer-events-none absolute top-[27px] left-[673px] h-[167px] w-[544px] border-[5px] border-[#ed1c24]" />
        </div>
    );
};

export default App;
